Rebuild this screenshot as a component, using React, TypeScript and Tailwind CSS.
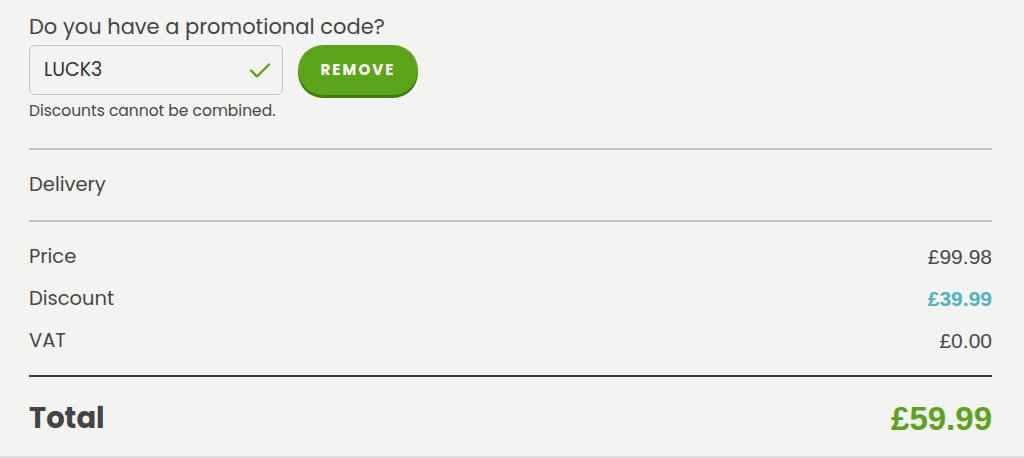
import React from "react";

const sans = "font-['Poppins','Open_Sans',sans-serif]";
const num = "font-['Liberation_Sans',Arial,sans-serif]";

export default function App() {
  return (
    <div className={`w-[1024px] h-[458px] bg-[#f3f3f1] text-[#474747] ${sans} border-b-2 border-[#dcdcdc] overflow-hidden`}>
      <div className="pl-[29px] pr-[32px]">
        <div className="pt-[14px] text-[21px] leading-[26px] text-[#474747]">Do you have a promotional code?</div>
        <div className="mt-[5px] flex items-center gap-[15px]">
          <div className="w-[254px] h-[50px] border border-[#c4c4c4] rounded-[6px] flex items-center justify-between pl-[14px] pr-[10px]">
            <span className="text-[19px] text-[#333]">LUCK3</span>
            <svg width="24" height="24" viewBox="0 0 24 24" fill="none" stroke="#5ba51d" strokeWidth="2.4" strokeLinecap="round" strokeLinejoin="round">
              <path d="M3 12.5l6 6L21 6.5" />
            </svg>
          </div>
          <button className="w-[120px] h-[50px] rounded-full bg-[#5ca51b] shadow-[0_3px_0_#3f7d0e] text-white text-[15px] font-bold tracking-[0.14em]">REMOVE</button>
        </div>
        <div className="mt-[6px] text-[15.5px] leading-[20px] text-[#474747]">Discounts cannot be combined.</div>
        <div className="mt-[27px] border-t-2 border-[#c2c2c2]" />
        <div className="h-[70px] flex items-center text-[19.5px]">Delivery</div>
        <div className="border-t-2 border-[#c2c2c2]" />
        <div className="pt-[14px] flex flex-col">
          <div className="h-[42px] flex items-center justify-between text-[19.5px]">
            <span>Price</span>
            <span className={`${num} text-[21px] text-[#4a4a4a]`}>£99.98</span>
          </div>
          <div className="h-[42px] flex items-center justify-between text-[19.5px]">
            <span>Discount</span>
            <span className={`${num} text-[21px] font-bold text-[#52b3c2]`}>£39.99</span>
          </div>
          <div className="h-[42px] flex items-center justify-between text-[19.5px]">
            <span>VAT</span>
            <span className={`${num} text-[21px] text-[#4a4a4a]`}>£0.00</span>
          </div>
        </div>
        <div className="mt-[13px] border-t-2 border-[#3a3a3a]" />
        <div className="h-[84px] flex items-center justify-between">
          <span className="text-[29px] font-bold text-[#444]">Total</span>
          <span className={`${num} text-[33px] font-bold text-[#5ca51b]`}>£59.99</span>
        </div>
      </div>
    </div>
  );
}
